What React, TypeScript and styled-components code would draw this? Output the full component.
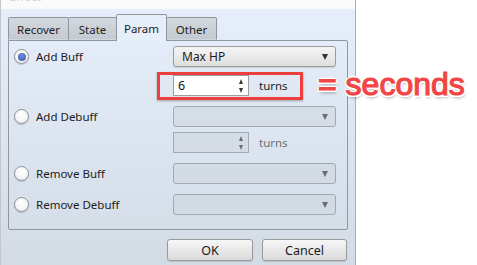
import React from "react";
import styled, { createGlobalStyle } from "styled-components";

const Global = createGlobalStyle`
  html, body { margin: 0; padding: 0; background: #ffffff; }
  body {
    width: 477px; height: 265px; overflow: hidden;
    font-family: "Noto Sans", "DejaVu Sans", sans-serif;
    color: #1c1c1c;
  }
`;

const Page = styled.div`
  position: relative;
  width: 477px;
  height: 265px;
  display: flex;
`;

const Dialog = styled.div`
  width: 356px;
  height: 265px;
  box-sizing: border-box;
  border-left: 1px solid #c2c6cb;
  border-right: 1px solid #a9aeb4;
  display: flex;
  flex-direction: column;
`;

const TitleBar = styled.div`
  height: 9px;
  box-sizing: border-box;
  background: #fafafa;
  overflow: hidden;
  display: flex;
  align-items: flex-end;
  padding: 0 0 6px 8px;
  font-size: 12px;
  line-height: 12px;
  color: #d6d6d6;
`;

const Body = styled.div`
  flex: 1;
  background: linear-gradient(#e5eefa, #d3dbe5);
  padding: 5px 7px 0 7px;
  display: flex;
  flex-direction: column;
`;

const TabRow = styled.div`
  display: flex;
  align-items: flex-end;
  position: relative;
  z-index: 2;
`;

const Tab = styled.div<{ $active?: boolean; $w: number }>`
  width: ${(p) => p.$w}px;
  height: ${(p) => (p.$active ? 27 : 23)}px;
  margin-bottom: ${(p) => (p.$active ? -1 : 0)}px;
  box-sizing: border-box;
  border: 1px solid #8e959d;
  border-bottom: ${(p) => (p.$active ? "none" : "1px solid transparent")};
  border-radius: 2px 2px 0 0;
  margin-left: -1px;
  &:first-child { margin-left: 0; }
  position: relative;
  z-index: ${(p) => (p.$active ? 2 : 1)};
  background: ${(p) =>
    p.$active
      ? "#e6eefa"
      : "linear-gradient(#d3d8de, #c4cad1)"};
  display: flex;
  align-items: center;
  justify-content: center;
  padding-top: ${(p) => (p.$active ? 0 : 1)}px;
  font-size: 11.5px;
  color: #1e1e1e;
`;

const Panel = styled.div`
  height: 190px;
  box-sizing: border-box;
  border: 1px solid #8f979f;
  border-radius: 0 2px 2px 2px;
  padding: 5px 11px 0 5px;
  display: flex;
  flex-direction: column;
  gap: 10px;
`;

const Section = styled.div`
  display: flex;
  align-items: flex-start;
`;

const Choice = styled.label`
  width: 159px;
  height: 21px;
  display: flex;
  align-items: center;
  gap: 7px;
  font-size: 11.5px;
  color: #1c1c1c;
`;

const Radio = styled.span<{ $checked?: boolean }>`
  width: 15px;
  height: 15px;
  box-sizing: border-box;
  border-radius: 50%;
  border: 1px solid #8a9097;
  background: radial-gradient(circle at 50% 35%, #ffffff 0%, #f4f4f4 60%, #e2e2e2 100%);
  box-shadow: 0 1px 1px rgba(0, 0, 0, 0.15);
  display: flex;
  align-items: center;
  justify-content: center;
  &::after {
    content: "";
    display: ${(p) => (p.$checked ? "block" : "none")};
    width: 8px;
    height: 8px;
    border-radius: 50%;
    background: radial-gradient(circle at 50% 35%, #6f8fd8, #3457ad);
  }
`;

const Controls = styled.div<{ $gap: number }>`
  display: flex;
  flex-direction: column;
  gap: ${(p) => p.$gap}px;
`;

const Select = styled.div<{ $disabled?: boolean }>`
  width: 163px;
  height: 21px;
  box-sizing: border-box;
  border: 1px solid ${(p) => (p.$disabled ? "#a3a9b1" : "#9b9b9b")};
  border-radius: 3px;
  background: ${(p) =>
    p.$disabled ? "rgba(205, 213, 223, 0.55)" : "linear-gradient(#f5f5f5, #dedede)"};
  box-shadow: ${(p) => (p.$disabled ? "none" : "0 1px 1px rgba(0,0,0,0.12)")};
  display: flex;
  align-items: center;
  justify-content: space-between;
  padding: 0 7px 0 8px;
  font-size: 12px;
  color: #1c1c1c;
`;

const Arrow = styled.span<{ $disabled?: boolean }>`
  width: 0;
  height: 0;
  border-left: 3.5px solid transparent;
  border-right: 3.5px solid transparent;
  border-top: 6px solid ${(p) => (p.$disabled ? "#6a6e73" : "#333333")};
`;

const SpinRow = styled.div`
  display: flex;
  align-items: center;
  gap: 10px;
`;

const Spin = styled.div<{ $disabled?: boolean }>`
  width: 76px;
  height: 21px;
  box-sizing: border-box;
  border: 1px solid ${(p) => (p.$disabled ? "#a3a9b1" : "#9c9c9c")};
  background: ${(p) => (p.$disabled ? "rgba(205, 213, 223, 0.55)" : "#ffffff")};
  display: flex;
  align-items: center;
  justify-content: space-between;
  padding: 0 5px 0 4px;
  font-size: 12.5px;
  color: #111;
`;

const Steppers = styled.span`
  display: flex;
  flex-direction: column;
  gap: 4px;
  align-items: center;
`;

const Step = styled.span<{ $up?: boolean; $disabled?: boolean }>`
  width: 0;
  height: 0;
  border-left: 2.5px solid transparent;
  border-right: 2.5px solid transparent;
  ${(p) =>
    p.$up
      ? `border-bottom: 5px solid ${p.$disabled ? "#6a6e73" : "#3a3a3a"};`
      : `border-top: 5px solid ${p.$disabled ? "#6a6e73" : "#3a3a3a"};`}
`;

const Unit = styled.span<{ $disabled?: boolean }>`
  font-size: 11.5px;
  color: ${(p) => (p.$disabled ? "#6b6f74" : "#1c1c1c")};
`;

const Footer = styled.div`
  display: flex;
  justify-content: flex-end;
  gap: 9px;
  padding: 9px 1px 0 0;
`;

const Button = styled.button<{ $w: number }>`
  width: ${(p) => p.$w}px;
  height: 22px;
  box-sizing: border-box;
  border: 1px solid #9a9a9a;
  border-radius: 3px;
  background: linear-gradient(#f7f7f7, #dadada);
  box-shadow: 0 1px 1px rgba(0, 0, 0, 0.12);
  font-family: "Noto Sans", sans-serif;
  font-size: 12.5px;
  color: #1a1a1a;
  padding: 0;
`;

const Highlight = styled.div`
  position: absolute;
  left: 157px;
  top: 72px;
  width: 146px;
  height: 28px;
  box-sizing: border-box;
  border: 3px solid #ee3f3f;
  box-shadow: 0 1px 2px rgba(0, 0, 0, 0.3);
`;

const Callout = styled.div`
  position: absolute;
  left: 318px;
  top: 68px;
  font-family: "Liberation Sans", Arial, sans-serif;
  font-size: 32px;
  line-height: 32px;
  color: #f24646;
  -webkit-text-stroke: 1.2px #f24646;
  white-space: nowrap;
  text-shadow:
    2px 0 0 #fff, -2px 0 0 #fff, 0 2px 0 #fff, 0 -2px 0 #fff,
    1.5px 1.5px 0 #fff, -1.5px 1.5px 0 #fff, 1.5px -1.5px 0 #fff, -1.5px -1.5px 0 #fff,
    1px 3px 3px rgba(0, 0, 0, 0.35);
`;

const tabs = [
  { label: "Recover", w: 61 },
  { label: "State", w: 49 },
  { label: "Param", w: 51, active: true },
  { label: "Other", w: 51 },
];

function SelectBox({ value, disabled }: { value?: string; disabled?: boolean }) {
  return (
    <Select $disabled={disabled}>
      <span>{value ?? ""}</span>
      <Arrow $disabled={disabled} />
    </Select>
  );
}

function SpinBox({ value, disabled }: { value?: string; disabled?: boolean }) {
  return (
    <SpinRow>
      <Spin $disabled={disabled}>
        <span>{value ?? ""}</span>
        <Steppers>
          <Step $up $disabled={disabled} />
          <Step $disabled={disabled} />
        </Steppers>
      </Spin>
      <Unit $disabled={disabled}>turns</Unit>
    </SpinRow>
  );
}

export default function App() {
  return (
    <Page>
      <Global />
      <Dialog>
        <TitleBar>Effect</TitleBar>
        <Body>
          <TabRow>
            {tabs.map((t) => (
              <Tab key={t.label} $w={t.w} $active={t.active}>
                {t.label}
              </Tab>
            ))}
          </TabRow>
          <Panel>
            <Section>
              <Choice>
                <Radio $checked />
                Add Buff
              </Choice>
              <Controls $gap={8}>
                <SelectBox value="Max HP" />
                <SpinBox value="6" />
              </Controls>
            </Section>
            <Section>
              <Choice>
                <Radio />
                Add Debuff
              </Choice>
              <Controls $gap={5}>
                <SelectBox disabled />
                <SpinBox disabled />
              </Controls>
            </Section>
            <Section>
              <Choice>
                <Radio />
                Remove Buff
              </Choice>
              <Controls $gap={0}>
                <SelectBox disabled />
              </Controls>
            </Section>
            <Section>
              <Choice>
                <Radio />
                Remove Debuff
              </Choice>
              <Controls $gap={0}>
                <SelectBox disabled />
              </Controls>
            </Section>
          </Panel>
          <Footer>
            <Button $w={86}>OK</Button>
            <Button $w={85}>Cancel</Button>
          </Footer>
        </Body>
      </Dialog>
      <Highlight />
      <Callout>= seconds</Callout>
    </Page>
  );
}
